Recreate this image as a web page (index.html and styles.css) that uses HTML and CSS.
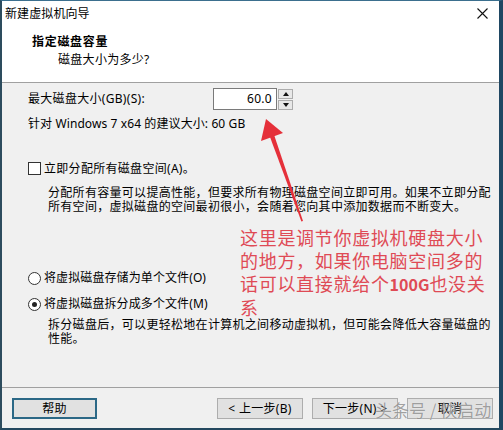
FILE: index.html
```html
<!DOCTYPE html>
<html lang="zh-CN">
<head>
  <meta charset="UTF-8">
  <title>新建虚拟机向导</title>
  <link rel="stylesheet" href="styles.css">
</head>
<body>
  <div class="window">
    <div class="titlebar">
      <span class="title">新建虚拟机向导</span>
      <svg class="close" width="11" height="11" viewBox="0 0 11 11">
        <path d="M0.5 0.5 L10.5 10.5 M10.5 0.5 L0.5 10.5" stroke="#111" stroke-width="1.1" fill="none"/>
      </svg>
    </div>
    <div class="header">
      <div class="h-title">指定磁盘容量</div>
      <div class="h-sub">磁盘大小为多少?</div>
    </div>

    <div class="content">
      <div class="size-row">
        <span class="size-label">最大磁盘大小(GB)(S):</span>
        <div class="spin">
          <div class="spin-value">60.0</div>
          <div class="spin-btns">
            <div class="spin-btn"><span class="tri-up"></span></div>
            <div class="spin-btn"><span class="tri-down"></span></div>
          </div>
        </div>
      </div>
      <div class="hint">针对 Windows 7 x64 的建议大小: 60 GB</div>

      <div class="check-row">
        <span class="checkbox"></span>
        <span>立即分配所有磁盘空间(A)。</span>
      </div>
      <p class="desc">分配所有容量可以提高性能，但要求所有物理磁盘空间立即可用。如果不立即分配<br>所有空间，虚拟磁盘的空间最初很小，会随着您向其中添加数据而不断变大。</p>

      <div class="radio-row first">
        <span class="radio"></span>
        <span>将虚拟磁盘存储为单个文件(O)</span>
      </div>
      <div class="radio-row second">
        <span class="radio checked"></span>
        <span>将虚拟磁盘拆分成多个文件(M)</span>
      </div>
      <p class="desc desc-split">拆分磁盘后，可以更轻松地在计算机之间移动虚拟机，但可能会降低大容量磁盘的<br>性能。</p>
    </div>

    <div class="footer">
      <button class="btn btn-focus">帮助</button>
      <div class="footer-right">
        <button class="btn">&lt; 上一步(B)</button>
        <button class="btn">下一步(N) &gt;</button>
        <button class="btn">取消</button>
      </div>
    </div>

    <!-- annotation laid over the dialog -->
    <div class="note">这里是调节你虚拟机硬盘大小<br>的地方，如果你电脑空间多的<br>话可以直接就给个<b>100G</b>也没关<br>系</div>
    <svg class="arrow" width="503" height="430" viewBox="0 0 503 430">
      <polygon points="266,119 261,141 283,133" fill="#e5303a"/>
      <polygon points="269.8,136.6 274.2,135.2 303,221 301.4,221.4" fill="#e5303a"/>
    </svg>
    <div class="watermark">头条号 / 快启动</div>
  </div>
</body>
</html>
```

FILE: styles.css
```css
body {
  margin: 0;
  font-family: "Noto Sans", "Noto Sans CJK SC", sans-serif;
  font-size: 12px;
  letter-spacing: 0.3px;
  color: #000;
}
.window {
  position: relative;
  width: 503px;
  height: 430px;
  box-sizing: border-box;
  border-left: 2px solid #2d4c5e;
  border-right: 4px solid #1f4763;
  border-top: 1px solid #3b6f8e;
  border-bottom: 2px solid #24485f;
  background: #f0f0f0;
  display: flex;
  flex-direction: column;
  overflow: hidden;
}
.titlebar {
  height: 25px;
  background: #fff;
  display: flex;
  align-items: center;
  justify-content: space-between;
  padding: 0 11px 0 3px;
}
.title {
  line-height: 14px;
  letter-spacing: 0.1px;
}
.close {
  display: block;
}
.header {
  height: 56px;
  background: #fff;
  border-bottom: 1px solid #a0a0a0;
}
.h-title {
  font-weight: bold;
  padding-left: 30px;
  margin-top: 9px;
  line-height: 14px;
  letter-spacing: 0.7px;
}
.h-sub {
  padding-left: 56px;
  margin-top: 4px;
  line-height: 14px;
}

.content {
  flex: 1;
  padding-left: 26px;
}
.size-row {
  display: flex;
  align-items: center;
  margin-top: 5px;
  height: 22px;
}
.size-label {
  width: 185px;
  line-height: 14px;
}
.spin {
  display: flex;
  height: 22px;
}
.spin-value {
  width: 58px;
  height: 20px;
  border: 1px solid #7a7a7a;
  background: #fff;
  text-align: right;
  padding-right: 4px;
  line-height: 20px;
}
.spin-btns {
  margin-left: 1px;
  width: 15px;
  display: flex;
  flex-direction: column;
  gap: 1px;
  padding-top: 1px;
}
.spin-btn {
  height: 9px;
  border: 1px solid #acacac;
  background: #e8e8e8;
  display: flex;
  align-items: center;
  justify-content: center;
}
.tri-up {
  border-left: 3px solid transparent;
  border-right: 3px solid transparent;
  border-bottom: 4px solid #111;
}
.tri-down {
  border-left: 3px solid transparent;
  border-right: 3px solid transparent;
  border-top: 4px solid #111;
}
.hint {
  margin-top: 7px;
  line-height: 14px;
  letter-spacing: 0.1px;
}

.check-row, .radio-row {
  display: flex;
  align-items: center;
  gap: 3px;
  line-height: 14px;
}
.check-row {
  margin-top: 31px;
  height: 13px;
}
.checkbox {
  width: 11px;
  height: 11px;
  border: 1px solid #333;
  background: #fff;
}
.desc {
  margin: 11px 0 0 0;
  padding-left: 20px;
  line-height: 14px;
}
.radio-row {
  height: 14px;
  letter-spacing: 0.1px;
}
.radio-row.first {
  margin-top: 57px;
}
.radio-row.second {
  margin-top: 12px;
}
.radio {
  width: 11px;
  height: 11px;
  border: 1px solid #333;
  border-radius: 50%;
  background: #fff;
  display: flex;
  align-items: center;
  justify-content: center;
}
.radio.checked::after {
  content: "";
  width: 5px;
  height: 5px;
  border-radius: 50%;
  background: #222;
}
.desc-split {
  margin-top: 7px;
}

.footer {
  border-top: 1px solid #a0a0a0;
  display: flex;
  justify-content: space-between;
  align-items: flex-start;
  padding: 10px 6px 0 10px;
  box-sizing: border-box;
  height: 41px;
}
.footer-right {
  display: flex;
  gap: 9px;
}
.btn {
  width: 86px;
  height: 21px;
  font: inherit;
  letter-spacing: 0.3px;
  line-height: 14px;
  background: #e1e1e1;
  border: 1px solid #adadad;
  padding: 0;
  color: #000;
}
.btn-focus {
  border: 2px solid #2b6886;
  width: 85px;
}

.note {
  position: absolute;
  left: 238px;
  top: 225px;
  font-family: "Noto Sans CJK SC", sans-serif;
  font-size: 18px;
  letter-spacing: 0.7px;
  line-height: 23px;
  color: #df4a55;
}
.note b {
  font-weight: bold;
  font-size: 16px;
  letter-spacing: 0;
}
.arrow {
  position: absolute;
  left: -2px;
  top: -1px;
}
.watermark {
  position: absolute;
  left: 373px;
  top: 397px;
  font-family: "Noto Sans CJK SC", sans-serif;
  font-size: 17px;
  letter-spacing: 0;
  line-height: 24px;
  color: rgba(100, 100, 100, 0.6);
  text-shadow: 0 0 1px rgba(255, 255, 255, 0.8);
  white-space: nowrap;
}
```
